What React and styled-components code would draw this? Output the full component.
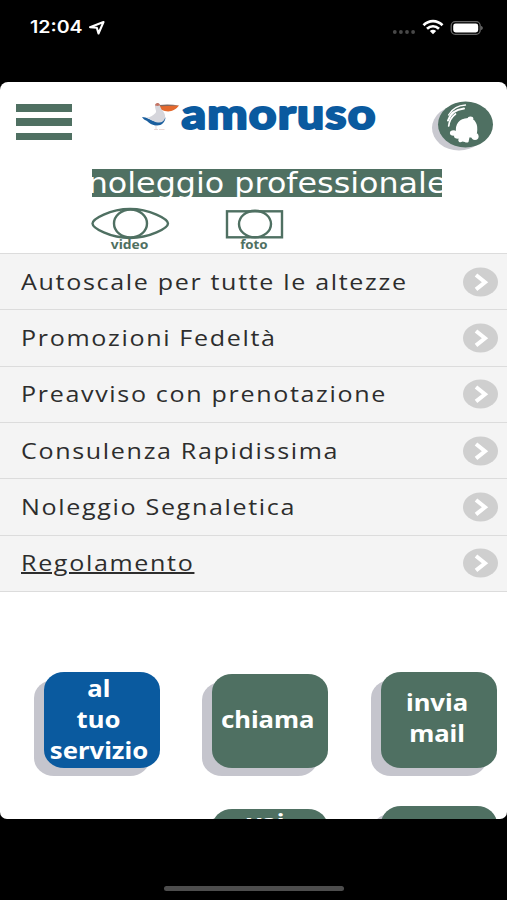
import React from "react";
import styled, { createGlobalStyle } from "styled-components";

const GlobalStyle = createGlobalStyle`
  body {
    margin: 0;
    background: #000;
    overflow: hidden;
  }
  * {
    box-sizing: border-box;
  }
`;

const green = "#4f7062";
const blue = "#0a5a9f";

const PhoneStyled = styled.div`
  width: 507px;
  height: 900px;
  background: #000;
  display: flex;
  flex-direction: column;
  font-family: "Open Sans", "Noto Sans", sans-serif;
`;

const StatusBar = styled.div`
  height: 82px;
  padding: 15px 24px 0 30px;
  display: flex;
  justify-content: space-between;
  align-items: flex-start;
`;

const StatusGroup = styled.div`
  height: 25px;
  display: flex;
  align-items: center;
`;

const Clock = styled.span`
  width: 58px;
  color: #fff;
  font: 600 17px/25px Inter, sans-serif;
  white-space: nowrap;
  transform: scaleX(${(props) => props.$stretch});
  transform-origin: left center;
`;

const Screen = styled.main`
  height: 737px;
  background: #fff;
  border-radius: 8px 8px 7px 7px;
  overflow: hidden;
`;

const Header = styled.header`
  height: 87px;
  padding: 19px 13px 0 16px;
  display: flex;
  align-items: flex-start;
`;

const MenuButton = styled.div`
  width: 56px;
  margin-top: 3px;
  display: flex;
  flex-direction: column;
  gap: 6.7px;
`;

const MenuLine = styled.span`
  height: 7.6px;
  background: ${green};
`;

const Logo = styled.svg`
  margin-left: 68px;
  overflow: visible;
`;

const Bell = styled.svg`
  margin-left: auto;
`;

const Banner = styled.div`
  width: 350px;
  height: 28px;
  margin-left: 92px;
  background: ${green};
  overflow: hidden;
  display: flex;
  justify-content: center;
`;

const BannerText = styled.span`
  color: #fff;
  font: 28px/29px "DejaVu Sans", sans-serif;
  white-space: nowrap;
  transform: scaleX(${(props) => props.$stretch});
`;

const MediaLinks = styled.div`
  height: 56px;
  padding: 10px 0 0 90px;
  display: flex;
  gap: 44px;
`;

const MediaLink = styled.div`
  width: 80px;
  display: flex;
  flex-direction: column;
  align-items: center;
`;

const MediaLabel = styled.span`
  color: ${green};
  font: bold 11.5px/11px "Noto Sans", sans-serif;
  margin-top: -1px;
  transform: scaleX(${(props) => props.$stretch});
`;

const List = styled.ul`
  margin: 0;
  padding: 0;
  list-style: none;
  border-bottom: 1px solid #dcdcdc;
`;

const ListRow = styled.li`
  height: 56.35px;
  padding: 0 9px 0 21px;
  display: flex;
  align-items: center;
  justify-content: space-between;
  background: #f4f4f4;
  border-top: 1px solid #dcdcdc;
`;

const ListText = styled.span`
  color: #2d2d2d;
  font: 21px/54px "Open Sans", "Noto Sans", sans-serif;
  letter-spacing: 1.4px;
  white-space: nowrap;
  text-decoration: ${(props) => (props.$underline ? "underline" : "none")};
  text-decoration-thickness: 1.5px;
  transform: scaleX(${(props) => props.$stretch});
  transform-origin: left center;
`;

const Tiles = styled.div`
  padding: 80px 0 0 34px;
  display: grid;
  grid-template-columns: 168px 169px 126px;
  grid-auto-rows: 134px;
`;

const Tile = styled.div`
  width: 116px;
  height: ${(props) => 96 - (props.$drop || 0)}px;
  margin-top: ${(props) => props.$drop || 0}px;
  margin-left: 10px;
  padding-right: ${(props) => props.$shift || 4}px;
  padding-bottom: ${(props) => props.$lift ?? 5}px;
  border-radius: 20px / 18px;
  background: ${(props) => props.$color || green};
  box-shadow: -10px 8px 0 #c5c5cd;
  display: flex;
  flex-direction: column;
  align-items: center;
  justify-content: ${(props) => (props.$top ? "flex-start" : "center")};
`;

const TileText = styled.span`
  color: #fff;
  font: 700 24px / ${(props) => props.$leading || 31}px "Noto Sans", "Open Sans", sans-serif;
  white-space: nowrap;
  transform: scaleX(${(props) => props.$stretch});
`;

const HomeBar = styled.div`
  width: 180px;
  height: 5px;
  margin: 67px 0 0 164px;
  border-radius: 3px;
  background: #4d4d4d;
`;

const items = [
  { text: "Autoscale per tutte le altezze" },
  { text: "Promozioni Fedeltà" },
  { text: "Preavviso con prenotazione" },
  { text: "Consulenza Rapidissima" },
  { text: "Noleggio Segnaletica" },
  { text: "Regolamento", underline: true },
];

const tiles = [
  { lines: ["al", "tuo", "servizio"], color: blue, shift: 6, lift: 3 },
  { lines: ["chiama"], drop: 2 },
  { lines: ["invia", "mail"], shift: 4, lift: 7 },
];

const ArrowIcon = () => (
  <svg width="36" height="30" viewBox="0 0 36 30">
    <ellipse cx="18.5" cy="15" rx="17.5" ry="14.5" fill="#cfcfcf" />
    <path d="M14 8l9 7.2-9 7.2" fill="none" stroke="#fff" strokeWidth="4" />
  </svg>
);

const LocationIcon = () => (
  <svg width="18" height="16" viewBox="0 0 18 16">
    <path
      d="M2 7.2L15.5 2 10.5 13.5 8.8 7.7z"
      fill="none"
      stroke="#fff"
      strokeWidth="2.1"
      strokeLinejoin="round"
    />
  </svg>
);

const StatusIcons = () => (
  <svg width="92" height="18" viewBox="0 0 92 18">
    <g fill="#484848">
      <circle cx="3.8" cy="13" r="1.9" />
      <circle cx="9.9" cy="13" r="1.9" />
      <circle cx="16" cy="13" r="1.9" />
      <circle cx="22.1" cy="13" r="1.9" />
    </g>
    <g fill="none" stroke="#fff" strokeWidth="2.7">
      <path d="M32.5 6.3C38 .8 46 .8 51.5 6.3" />
      <path d="M36 9.8c3.6-3.4 8.4-3.4 12 0" />
    </g>
    <path d="M38.8 12.1c2-1.7 4.4-1.7 6.4 0L42 15.3z" fill="#fff" />
    <rect x="60.2" y="2.7" width="29" height="12.6" rx="4" fill="none" stroke="#666" strokeWidth="1.3" />
    <rect x="62.2" y="4.5" width="25" height="9" rx="2.4" fill="#fff" />
    <path d="M90.2 7v4c2-.7 2-3.3 0-4z" fill="#777" />
  </svg>
);

const Brand = () => (
  <Logo width="236" height="34" viewBox="140 101 236 34">
    <path
      d="M142 117C147 117 150 120 154 121C158 121.5 162 120 165.5 117.5C165 122 162 125.5 157 125.5C152 125.5 149 123 147 121C145 120 143 119 142 117z"
      fill="#1b5f9e"
    />
    <path
      d="M146.5 117.5C150 117.5 153 115.5 155.5 113C157 111 155 109 155 106.5C155 104 157 103 159 104C161.5 105 161 108 162.5 110.5C164.5 113 165.5 115 165 118C164.5 121 161.5 123 158 122.5C153 122 151 119 146.5 117.5z"
      fill="#d6d6dc"
    />
    <path d="M155 105.5C155 102.5 159 102 160 105L158 106z" fill="#c47464" />
    <path d="M159.5 105C166.5 105 172.5 104.5 179 105.5C175 111 168 113.500 161.5 109.5z" fill="#e4692d" />
    <path d="M159.5 105C166.5 104 172.5 104.5 179 105.5L161 106.3z" fill="#806860" />
    <path d="M156 125.5V129.5M154 129.5H158M159 129.5H164.5" stroke="#dfc9c5" strokeWidth=".7" />
    <text
      x="181.5"
      y="129"
      textLength="195"
      lengthAdjust="spacingAndGlyphs"
      fontFamily="Lato, sans-serif"
      fontWeight="900"
      fontSize="41"
      letterSpacing="1"
      fill={blue}
      stroke={blue}
      strokeWidth="2"
      strokeLinejoin="round"
    >
      amoruso
    </text>
  </Logo>
);

const BellIcon = () => (
  <Bell width="62" height="51" viewBox="432 101 62 51">
    <ellipse cx="459" cy="128" rx="27" ry="22.5" fill="#c9c9d0" />
    <ellipse cx="465.5" cy="124.5" rx="27.5" ry="23" fill={green} />
    <g fill="#fff">
      <path d="M456 132C455 124 459 118.500 468 118C475 118 478.500 124 477 133L474 138L456 135.500z" />
      <ellipse cx="470.5" cy="118.5" rx="2.8" ry="2" />
      <ellipse cx="453.5" cy="133" rx="3.6" ry="2.7" />
      <ellipse cx="475" cy="136.500" rx="3.6" ry="3.4" />
      <ellipse cx="458" cy="136" rx="4" ry="2.7" />
      <path d="M459 135H470L468.500 142C466.500 143.500 464.500 141.500 462.500 141.500C460 143.500 457 141.500 459 138z" />
    </g>
    <g fill="none" stroke="#fff" strokeLinecap="round">
      <path d="M448.5 115C452 109 457.5 105.5 465.5 105" strokeWidth="1.3" />
      <path d="M448 120.5C450 113.5 456 109.500 464 108.500" strokeWidth="2" />
      <path d="M448.7 126C449.200 120.500 451.500 117 455.500 114" strokeWidth="1.7" />
    </g>
  </Bell>
);

const App = () => {
  return (
    <PhoneStyled>
      <GlobalStyle />
      <StatusBar>
        <StatusGroup>
          <Clock $stretch={1.15}>12:04</Clock>
          <LocationIcon />
        </StatusGroup>
        <StatusGroup>
          <StatusIcons />
        </StatusGroup>
      </StatusBar>
      <Screen>
        <Header>
          <MenuButton>
            <MenuLine />
            <MenuLine />
            <MenuLine />
          </MenuButton>
          <Brand />
          <BellIcon />
        </Header>
        <Banner>
          <BannerText $stretch={1.135}>noleggio professionale</BannerText>
        </Banner>
        <MediaLinks>
          <MediaLink>
            <svg width="80" height="33" viewBox="0 0 80 33">
              <g fill="none" stroke={green} strokeWidth="2.4">
                <path d="M2.5 16.5C2.5 12 20 2 40 2s38 10 38 14.5S60 31 40 31 2.5 21 2.5 16.5z" />
                <ellipse cx="40.5" cy="16.5" rx="16.5" ry="14" />
              </g>
            </svg>
            <MediaLabel $stretch={1.2}>video</MediaLabel>
          </MediaLink>
          <MediaLink>
            <svg width="60" height="33" viewBox="0 0 60 33">
              <g fill="none" stroke={green} strokeWidth="2.4">
                <rect x="3" y="4.3" width="55" height="26" />
                <ellipse cx="31" cy="17" rx="16" ry="13.3" />
              </g>
            </svg>
            <MediaLabel $stretch={1.15}>foto</MediaLabel>
          </MediaLink>
        </MediaLinks>
        <List>
          {items.map((item) => (
            <ListRow key={item.text}>
              <ListText $stretch={1.193} $underline={item.underline}>
                {item.text}
              </ListText>
              <ArrowIcon />
            </ListRow>
          ))}
        </List>
        <Tiles>
          {tiles.map((tile) => (
            <Tile
              key={tile.lines[0]}
              $color={tile.color}
              $drop={tile.drop}
              $shift={tile.shift}
              $lift={tile.lift}
            >
              {tile.lines.map((line) => (
                <TileText key={line} $stretch={1.07}>
                  {line}
                </TileText>
              ))}
            </Tile>
          ))}
          <span />
          <Tile $drop={3} $shift={8} $top>
            <TileText $stretch={1.07} $leading={26}>
              vai
            </TileText>
          </Tile>
          <Tile />
        </Tiles>
      </Screen>
      <HomeBar />
    </PhoneStyled>
  );
};

export default App;
